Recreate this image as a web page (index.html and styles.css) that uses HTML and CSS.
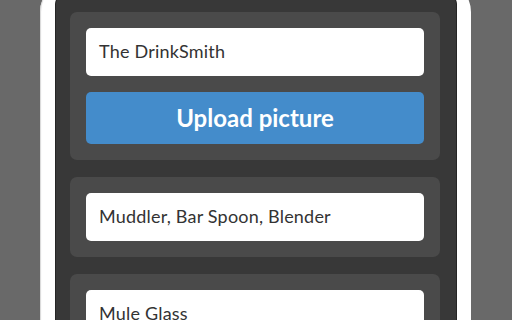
FILE: index.html
```html
<!DOCTYPE html>
<html>
<head>
<meta charset="utf-8">
<link rel="stylesheet" href="styles.css">
</head>
<body>
<div class="phone">
  <div class="screen">
    <section class="card">
      <div class="field">The DrinkSmith</div>
      <button class="upload">Upload picture</button>
    </section>
    <section class="card">
      <div class="field">Muddler, Bar Spoon, Blender</div>
    </section>
    <section class="card">
      <div class="field">Mule Glass</div>
    </section>
  </div>
</div>
</body>
</html>
```
FILE: styles.css
```css
html, body {
  margin: 0;
  padding: 0;
  height: 100%;
  overflow: hidden;
}
body {
  background: #696969;
  font-family: "Lato", "Liberation Sans", sans-serif;
}
.phone {
  margin: -20px 0 0 40px;
  width: 400px;
  padding: 16px 15px 0 16px;
  background: #ffffff;
  border-radius: 32px;
  box-shadow: inset 2px 0 1px -1px #d8d8d8;
  height: 400px;
}
.screen {
  background: #383838;
  border-radius: 8px;
  box-shadow: 0 0 0 1px #252525;
  padding: 16px 16px 0 14px;
  height: 100%;
  display: flex;
  flex-direction: column;
  gap: 17px;
}
.card {
  background: #4a4a4a;
  border-radius: 7px;
  padding: 16px;
  display: flex;
  flex-direction: column;
  gap: 16px;
}
.field {
  height: 48px;
  box-sizing: border-box;
  background: #ffffff;
  border-radius: 5px;
  color: #333333;
  font-size: 18px;
  letter-spacing: 0.2px;
  display: flex;
  align-items: center;
  padding: 0 0 3px 13px;
}
.upload {
  height: 52px;
  border: none;
  border-radius: 5px;
  background: #448ccb;
  color: #ffffff;
  font-family: "Lato", "Liberation Sans", sans-serif;
  font-weight: 700;
  font-size: 24px;
  padding: 0 0 2px;
}
```
